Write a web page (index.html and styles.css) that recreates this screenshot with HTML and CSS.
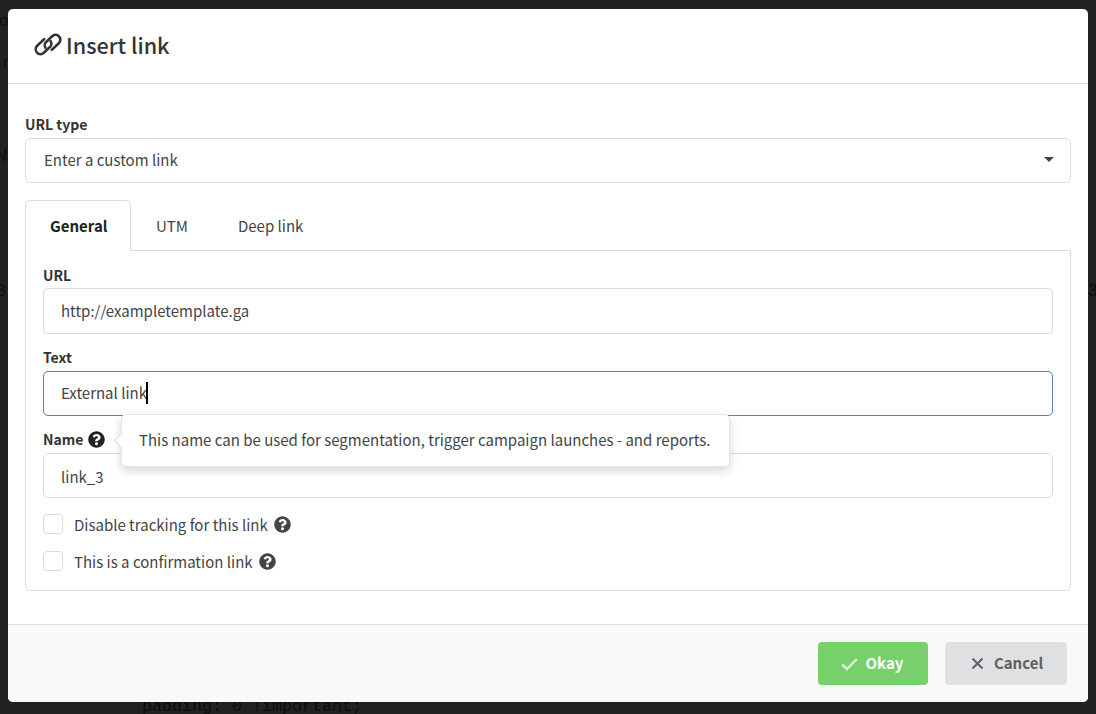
FILE: index.html
```html
<!DOCTYPE html>
<html lang="en">
<head>
<meta charset="utf-8">
<title>Insert link</title>
<link rel="stylesheet" href="styles.css">
</head>
<body>
<svg class="defs" width="0" height="0" aria-hidden="true">
  <symbol id="q" viewBox="0 0 512 512"><path fill="currentColor" d="M504 256c0 136.997-111.043 248-248 248S8 392.997 8 256C8 119.083 119.043 8 256 8s248 111.083 248 248zM262.655 90c-54.497 0-89.255 22.957-116.549 63.758-3.536 5.286-2.353 12.415 2.715 16.258l34.699 26.31c5.205 3.947 12.621 3.008 16.665-2.122 17.864-22.658 30.113-35.797 57.303-35.797 20.429 0 45.698 13.148 45.698 32.958 0 14.976-12.363 22.667-32.534 33.976C247.128 238.528 216 254.941 216 296v4c0 6.627 5.373 12 12 12h56c6.627 0 12-5.373 12-12v-1.333c0-28.462 83.186-29.647 83.186-106.667 0-58.002-60.165-102-116.531-102zM256 338c-25.365 0-46 20.635-46 46 0 25.364 20.635 46 46 46s46-20.636 46-46c0-25.365-20.635-46-46-46z"/></symbol>
</svg>
<div class="backdrop-code">padding: 0 !important;</div>
<span class="bg-glyph g1">o</span>
<span class="bg-glyph g2">r</span>
<span class="bg-glyph g3">N</span>
<span class="bg-glyph g4">B</span>
<span class="bg-glyph g5">3</span>
<div class="modal">
  <header class="modal-head">
    <svg class="link-icon" viewBox="0 0 28 23" width="28" height="23" fill="none" stroke="currentColor" stroke-width="2.6" stroke-linecap="round">
      <path d="M10.2 6.1 L3.2 12.8 A4.8 4.8 0 0 0 9.8 19.8 L15.3 14.6 A4.8 4.8 0 0 0 16.6 8.2"/>
      <path d="M17.8 16.9 L24.8 10.2 A4.8 4.8 0 0 0 18.2 3.2 L12.7 8.4 A4.8 4.8 0 0 0 11.4 14.8"/>
    </svg>
    <h1 class="modal-title">Insert link</h1>
  </header>
  <div class="modal-body">
    <label class="field-label">URL type</label>
    <div class="select">
      <span>Enter a custom link</span>
      <span class="select-arrow"></span>
    </div>
    <nav class="tabs">
      <a class="tab active">General</a>
      <a class="tab">UTM</a>
      <a class="tab">Deep link</a>
    </nav>
    <section class="pane">
      <label class="field-label">URL</label>
      <div class="input">http://exampletemplate.ga</div>
      <label class="field-label label-text">Text</label>
      <div class="input focused"><span>External link</span><span class="caret"></span></div>
      <div class="field-label label-name">
        <span>Name</span>
        <svg class="help dark"><use href="#q"/></svg>
        <div class="tooltip">This name can be used for segmentation, trigger campaign launches - and reports.</div>
      </div>
      <div class="input input-name">link_3</div>
      <div class="check first"><span class="box"></span><span>Disable tracking for this link</span><svg class="help"><use href="#q"/></svg></div>
      <div class="check second"><span class="box"></span><span>This is a confirmation link</span><svg class="help"><use href="#q"/></svg></div>
    </section>
  </div>
  <footer class="modal-foot">
    <button class="btn ok">
      <svg width="17" height="14" viewBox="0 0 17 14" fill="none" stroke="currentColor" stroke-width="2.4"><path d="M1.2 7.5 L6 12 L15.8 2"/></svg>
      <span>Okay</span>
    </button>
    <button class="btn cancel">
      <svg width="13" height="13" viewBox="0 0 13 13" fill="none" stroke="currentColor" stroke-width="2"><path d="M1.5 1.5 L11.5 11.5 M11.5 1.5 L1.5 11.5"/></svg>
      <span>Cancel</span>
    </button>
  </footer>
</div>
</body>
</html>
```
FILE: styles.css
```css
* { box-sizing: border-box; }
html, body { margin: 0; height: 714px; overflow: hidden; }
body {
  background: #212121;
  font-family: "Noto Sans CJK SC", "Noto Sans", sans-serif;
  font-size: 15px;
  color: #444;
  padding: 9px 8px 12px;
  position: relative;
}
.defs { position: absolute; }
.backdrop-code {
  position: absolute;
  left: 142px;
  top: 698px;
  font: 16.67px/18px "Liberation Mono", monospace;
  color: #0c0c0c;
}
.bg-glyph {
  position: absolute;
  font: 17px/20px "Liberation Sans", sans-serif;
  color: #0f0f0f;
}
.g1 { left: -1px; top: 11px; }
.g2 { left: 3px; top: 52px; color: #111; }
.g3 { left: -5px; top: 146px; }
.g4 { left: -5px; top: 281px; }
.g5 { left: 1088px; top: 281px; }
.modal {
  position: relative;
  width: 1080px;
  height: 693px;
  background: #fff;
  border-radius: 5px;
  display: flex;
  flex-direction: column;
  overflow: hidden;
}
.modal-head {
  height: 75px;
  flex: none;
  border-bottom: 1px solid #dcdcdc;
  display: flex;
  align-items: center;
  gap: 4px;
  padding: 0 0 3px 26px;
  color: #333;
}
.link-icon { display: block; }
.modal-title { margin: 0; font-size: 21.6px; font-weight: 500; line-height: 30px; }
.modal-body { flex: 1; padding: 30px 17px 0; }
.field-label {
  display: block;
  height: 20px;
  line-height: 20px;
  font-size: 14px;
  font-weight: 600;
  margin-bottom: 4px;
  color: #333;
}
.select, .input {
  border: 1px solid #dcdcdc;
  border-radius: 5px;
  display: flex;
  align-items: center;
  background: #fff;
  line-height: 22px;
}
.select {
  height: 45px;
  padding: 0 16px 2px 18px;
  justify-content: space-between;
}
.select-arrow {
  width: 0; height: 0;
  border-left: 5px solid transparent;
  border-right: 5px solid transparent;
  border-top: 5px solid #444;
}
.tabs { display: flex; margin-top: 17px; height: 51px; position: relative; z-index: 1; }
.tab {
  height: 51px;
  padding: 0 24px 2px;
  display: flex;
  align-items: center;
  border: 1px solid transparent;
  border-bottom: 0;
  border-radius: 5px 5px 0 0;
}
.tab.active { width: 106px; border-color: #dcdcdc; background: #fff; font-weight: 600; color: #222; }
.pane {
  margin-top: -1px;
  height: 341px;
  border: 1px solid #dcdcdc;
  border-radius: 0 0 5px 5px;
  padding: 14px 17px 0;
}
.pane > .field-label:first-child { margin-bottom: 3px; }
.input { height: 46px; padding: 0 17px; }
.label-text { margin-top: 13px; margin-bottom: 4px; }
.input.focused { height: 45px; border-color: #6875c4; padding: 0 17px 2px; }
.caret { width: 2px; height: 22px; background: #000; margin-left: -1px; }
.label-name { margin-top: 14px; margin-bottom: 3px; padding-bottom: 2px; display: flex; align-items: center; gap: 5px; position: relative; }
.input-name { height: 45px; padding: 2px 17px 0; }
.help { width: 17px; height: 17px; color: #444; flex: none; }
.help.dark { color: #222; }
.tooltip {
  position: absolute;
  left: 78px;
  top: -16px;
  width: 609px;
  height: 53px;
  padding: 0 17px 2px;
  display: flex;
  align-items: center;
  background: #fff;
  border: 1px solid #e6e6e6;
  border-radius: 5px;
  box-shadow: 0 4px 10px rgba(0,0,0,.16);
  font-size: 15px;
  font-weight: 400;
  color: #444;
  white-space: nowrap;
  z-index: 5;
}
.tooltip::before {
  content: "";
  position: absolute;
  left: -6px;
  top: 20px;
  width: 10px;
  height: 10px;
  background: #fff;
  border-left: 1px solid #dedede;
  border-bottom: 1px solid #dedede;
  transform: rotate(45deg);
}
.check { display: flex; align-items: center; height: 22px; }
.check.first { margin-top: 15px; }
.check.second { margin-top: 15px; }
.box {
  width: 20px; height: 20px;
  border: 1px solid #dcdcdc;
  border-radius: 4px;
  margin-right: 11px;
  flex: none;
}
.check .help { margin-left: 6px; }
.modal-foot {
  height: 78px;
  flex: none;
  border-top: 1px solid #dcdcdc;
  background: #f8f9fb;
  display: flex;
  justify-content: flex-end;
  align-items: flex-start;
  gap: 17px;
  padding: 17px 21px 0 0;
}
.btn {
  height: 43px;
  border: 0;
  border-radius: 4px;
  display: flex;
  align-items: center;
  justify-content: center;
  font: 700 15px "Noto Sans CJK SC", "Noto Sans", sans-serif;
}
.btn.ok { width: 110px; background: #78d06c; color: #fff; gap: 8px; padding: 0 2px 2px 0; }
.btn.ok svg { color: #d8f2d4; margin-top: 2px; }
.btn.cancel { width: 122px; background: #dfe0e2; color: #5e6064; gap: 10px; padding: 0 0 2px 2px; }
.btn.cancel svg { margin-top: 2px; }
```
